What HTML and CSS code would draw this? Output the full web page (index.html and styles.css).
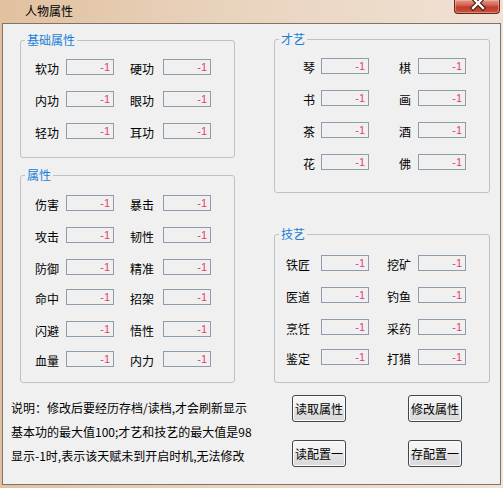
FILE: index.html
```html
<!DOCTYPE html>
<html lang="zh-CN">
<head>
<meta charset="utf-8">
<title>人物属性</title>
<link rel="stylesheet" href="styles.css">
</head>
<body>
<div class="window">
  <div class="titlebar">
    <span class="title">人物属性</span>
    <div class="close">
      <svg width="46" height="14" viewBox="0 0 46 14">
        <path d="M19 -2 L29 8 M29 -2 L19 8" stroke="#4a1c14" stroke-width="4.6" stroke-linecap="square" fill="none"/>
        <path d="M19 -2 L29 8 M29 -2 L19 8" stroke="#ffffff" stroke-width="2.4" stroke-linecap="square" fill="none"/>
      </svg>
    </div>
  </div>
  <div class="client">
    <div class="main">
      <div class="col col-left">
        <fieldset class="group g1">
          <legend>基础属性</legend>
          <div class="grid">
            <span class="lbl">软功</span><input class="val" value="-1" readonly>
            <span class="lbl lbl2">硬功</span><input class="val" value="-1" readonly>
            <span class="lbl">内功</span><input class="val" value="-1" readonly>
            <span class="lbl lbl2">眼功</span><input class="val" value="-1" readonly>
            <span class="lbl">轻功</span><input class="val" value="-1" readonly>
            <span class="lbl lbl2">耳功</span><input class="val" value="-1" readonly>
          </div>
        </fieldset>
        <fieldset class="group g2">
          <legend>属性</legend>
          <div class="grid">
            <span class="lbl">伤害</span><input class="val" value="-1" readonly>
            <span class="lbl lbl2">暴击</span><input class="val" value="-1" readonly>
            <span class="lbl">攻击</span><input class="val" value="-1" readonly>
            <span class="lbl lbl2">韧性</span><input class="val" value="-1" readonly>
            <span class="lbl">防御</span><input class="val" value="-1" readonly>
            <span class="lbl lbl2">精准</span><input class="val" value="-1" readonly>
            <span class="lbl">命中</span><input class="val" value="-1" readonly>
            <span class="lbl lbl2">招架</span><input class="val" value="-1" readonly>
            <span class="lbl">闪避</span><input class="val" value="-1" readonly>
            <span class="lbl lbl2">悟性</span><input class="val" value="-1" readonly>
            <span class="lbl">血量</span><input class="val" value="-1" readonly>
            <span class="lbl lbl2">内力</span><input class="val" value="-1" readonly>
          </div>
        </fieldset>
      </div>
      <div class="col col-right">
        <fieldset class="group g3">
          <legend>才艺</legend>
          <div class="grid">
            <span class="lbl">琴</span><input class="val" value="-1" readonly>
            <span class="lbl lbl2">棋</span><input class="val" value="-1" readonly>
            <span class="lbl">书</span><input class="val" value="-1" readonly>
            <span class="lbl lbl2">画</span><input class="val" value="-1" readonly>
            <span class="lbl">茶</span><input class="val" value="-1" readonly>
            <span class="lbl lbl2">酒</span><input class="val" value="-1" readonly>
            <span class="lbl">花</span><input class="val" value="-1" readonly>
            <span class="lbl lbl2">佛</span><input class="val" value="-1" readonly>
          </div>
        </fieldset>
        <fieldset class="group g4">
          <legend>技艺</legend>
          <div class="grid">
            <span class="lbl">铁匠</span><input class="val" value="-1" readonly>
            <span class="lbl lbl2">挖矿</span><input class="val" value="-1" readonly>
            <span class="lbl">医道</span><input class="val" value="-1" readonly>
            <span class="lbl lbl2">钓鱼</span><input class="val" value="-1" readonly>
            <span class="lbl">烹饪</span><input class="val" value="-1" readonly>
            <span class="lbl lbl2">采药</span><input class="val" value="-1" readonly>
            <span class="lbl">鉴定</span><input class="val" value="-1" readonly>
            <span class="lbl lbl2">打猎</span><input class="val" value="-1" readonly>
          </div>
        </fieldset>
      </div>
    </div>
    <div class="footer">
      <div class="notes">
        <p>说明：修改后要经历存档/读档,才会刷新显示</p>
        <p>基本功的最大值100;才艺和技艺的最大值是98</p>
        <p>显示-1时,表示该天赋未到开启时机,无法修改</p>
      </div>
      <div class="buttons">
        <button class="btn">读取属性</button>
        <button class="btn">修改属性</button>
        <button class="btn">读配置一</button>
        <button class="btn">存配置一</button>
      </div>
    </div>
  </div>
</div>
</body>
</html>
```
FILE: styles.css
```css
html, body {
  margin: 0;
  padding: 0;
}
body {
  width: 503px;
  height: 488px;
  overflow: hidden;
  font-family: "Noto Sans CJK SC", "Noto Sans", sans-serif;
  font-size: 12px;
  color: #000;
  background: #e6cfb7;
}
.window {
  width: 503px;
  height: 488px;
  box-sizing: border-box;
  padding: 0 2px 3px 2px;
  display: flex;
  flex-direction: column;
  background: linear-gradient(to right, #e1c19f 0%, #e9d3bd 45%, #f0e2d5 100%);
}
.titlebar {
  height: 23px;
  display: flex;
  align-items: flex-start;
  flex: none;
}
.title {
  padding: 4px 0 0 23px;
  line-height: 14px;
  font-size: 12px;
}
.close {
  margin-left: auto;
  margin-right: 1px;
  width: 46px;
  height: 14px;
  box-sizing: border-box;
  border: 1px solid #5e2a20;
  border-top: none;
  border-radius: 0 0 4px 4px;
  background: linear-gradient(#e3978a 0%, #d66a56 35%, #bf3d2a 55%, #c9533e 100%);
  box-shadow: inset 0 0 0 1px rgba(255, 200, 190, 0.45);
  overflow: hidden;
}
.close svg {
  display: block;
  margin-left: -1px;
}
.client {
  flex: 1;
  box-sizing: border-box;
  border: 1px solid #7d746a;
  background: #f0f0f0;
}
.main {
  display: flex;
  gap: 39px;
  padding: 8px 0 0 17px;
}
.col {
  display: flex;
  flex-direction: column;
}
.col-left {
  margin-top: 1px;
  width: 215px;
}
.col-right {
  width: 216px;
}
.group {
  margin: 0;
  padding: 0;
  min-width: 0;
  border: 1px solid #bdc1c5;
  border-radius: 3px;
}
.group legend {
  margin-left: 4px;
  padding: 0 2px;
  line-height: 14px;
  font-size: 12px;
  color: #1a7fd8;
}
.g2 {
  margin-top: 10px;
}
.g4 {
  margin-top: 34px;
}
.grid {
  display: grid;
  grid-template-columns: 31px 48px 49px 48px;
  grid-auto-rows: 16px;
  row-gap: 16px;
  align-items: start;
}
.g1 .grid {
  padding: 12px 0 18px 14px;
}
.g2 .grid {
  padding: 13px 0 15px 14px;
  grid-template-rows: 32px 32px 30px 32px 30px 16px;
  row-gap: 0;
}
.g3 .grid {
  padding: 12px 0 22px 16px;
  grid-template-columns: 30px 48px 49px 48px;
}
.g4 .grid {
  padding: 14px 0 17px 11px;
  grid-template-columns: 35px 48px 49px 48px;
  grid-template-rows: 32px 32px 30px 16px;
  row-gap: 0;
}
.lbl {
  line-height: 16px;
  padding-top: 2px;
  white-space: nowrap;
}
.lbl2 {
  padding-left: 16px;
}
.g3 .lbl {
  text-align: right;
  padding-right: 6px;
}
.g3 .lbl2 {
  padding-left: 0;
  padding-right: 7px;
}
.g4 .lbl2 {
  padding-left: 18px;
}
.val {
  box-sizing: border-box;
  width: 48px;
  height: 16px;
  margin: 0;
  padding: 0 3px 0 0;
  border: 1px solid #8e9cab;
  border-radius: 0;
  background: #f0f0f0;
  color: #e23c78;
  font: 11px "Liberation Sans", sans-serif;
  line-height: 14px;
  text-align: right;
  outline: none;
}
.footer {
  display: flex;
  align-items: flex-start;
  padding-top: 12px;
}
.notes {
  box-sizing: border-box;
  width: 289px;
  padding: 1px 0 0 8px;
}
.notes p {
  margin: 0;
  line-height: 24px;
  white-space: nowrap;
  font-size: 12px;
}
.buttons {
  display: grid;
  grid-template-columns: 54px 54px;
  grid-template-rows: 27px 27px;
  column-gap: 62px;
  row-gap: 18px;
}
.btn {
  box-sizing: border-box;
  width: 54px;
  height: 27px;
  margin: 0;
  padding: 0;
  border: 1px solid #3c4754;
  border-radius: 3px;
  background: linear-gradient(#f7f7f7 0%, #efefef 48%, #e3e3e3 52%, #d9d9d9 100%);
  box-shadow: inset 0 0 0 1px #fcfcfc;
  font-family: "Noto Sans CJK SC", "Noto Sans", sans-serif;
  font-size: 12px;
  line-height: 25px;
  color: #000;
  white-space: nowrap;
}
```
